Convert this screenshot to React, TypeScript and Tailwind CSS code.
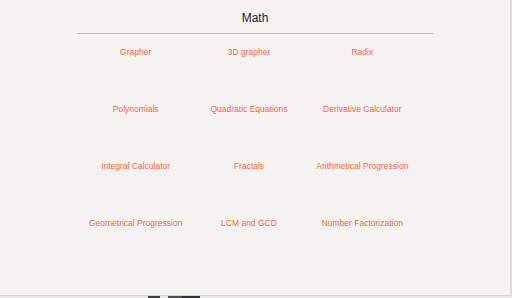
const tools = [
  "Grapher",
  "3D grapher",
  "Radix",
  "Polynomials",
  "Quadratic Equations",
  "Derivative Calculator",
  "Integral Calculator",
  "Fractals",
  "Arithmetical Progression",
  "Geometrical Progression",
  "LCM and GCD",
  "Number Factorization",
];

export default function App() {
  return (
    <div className="w-[512px] h-[298px] flex flex-col bg-[#e9e8e6] overflow-hidden font-['Liberation_Sans',Arial,sans-serif]">
      <div className="flex flex-1 min-h-0">
        <div className="flex-1 bg-[#f5f3f1] flex flex-col items-center">
          <h1 className="mt-[10px] text-[12px] leading-[16px] text-[#1c2433]">Math</h1>
          <div className="mt-[7px] w-[356px] border-t border-[#bcbcbc]">
            <div className="grid grid-cols-3 w-[340px] ml-[2px] pt-[11px] gap-y-[43px]">
              {tools.map((t) => (
                <a
                  key={t}
                  href="#"
                  className="text-center text-[8.5px] leading-[14px] text-[#f2673f] whitespace-nowrap"
                >
                  {t}
                </a>
              ))}
            </div>
          </div>
        </div>
        <div className="w-[2px] bg-[#dcdcdc]" />
      </div>
      <div className="h-[1px] bg-[#d4d4d4]" />
      <div className="h-[2px] flex">
        <div className="w-[148px]" />
        <div className="w-[12px] bg-[#3a3f47]" />
        <div className="w-[8px]" />
        <div className="w-[14px] bg-[#4a5058]" />
        <div className="w-[18px] bg-[#2f3238]" />
      </div>
    </div>
  );
}
